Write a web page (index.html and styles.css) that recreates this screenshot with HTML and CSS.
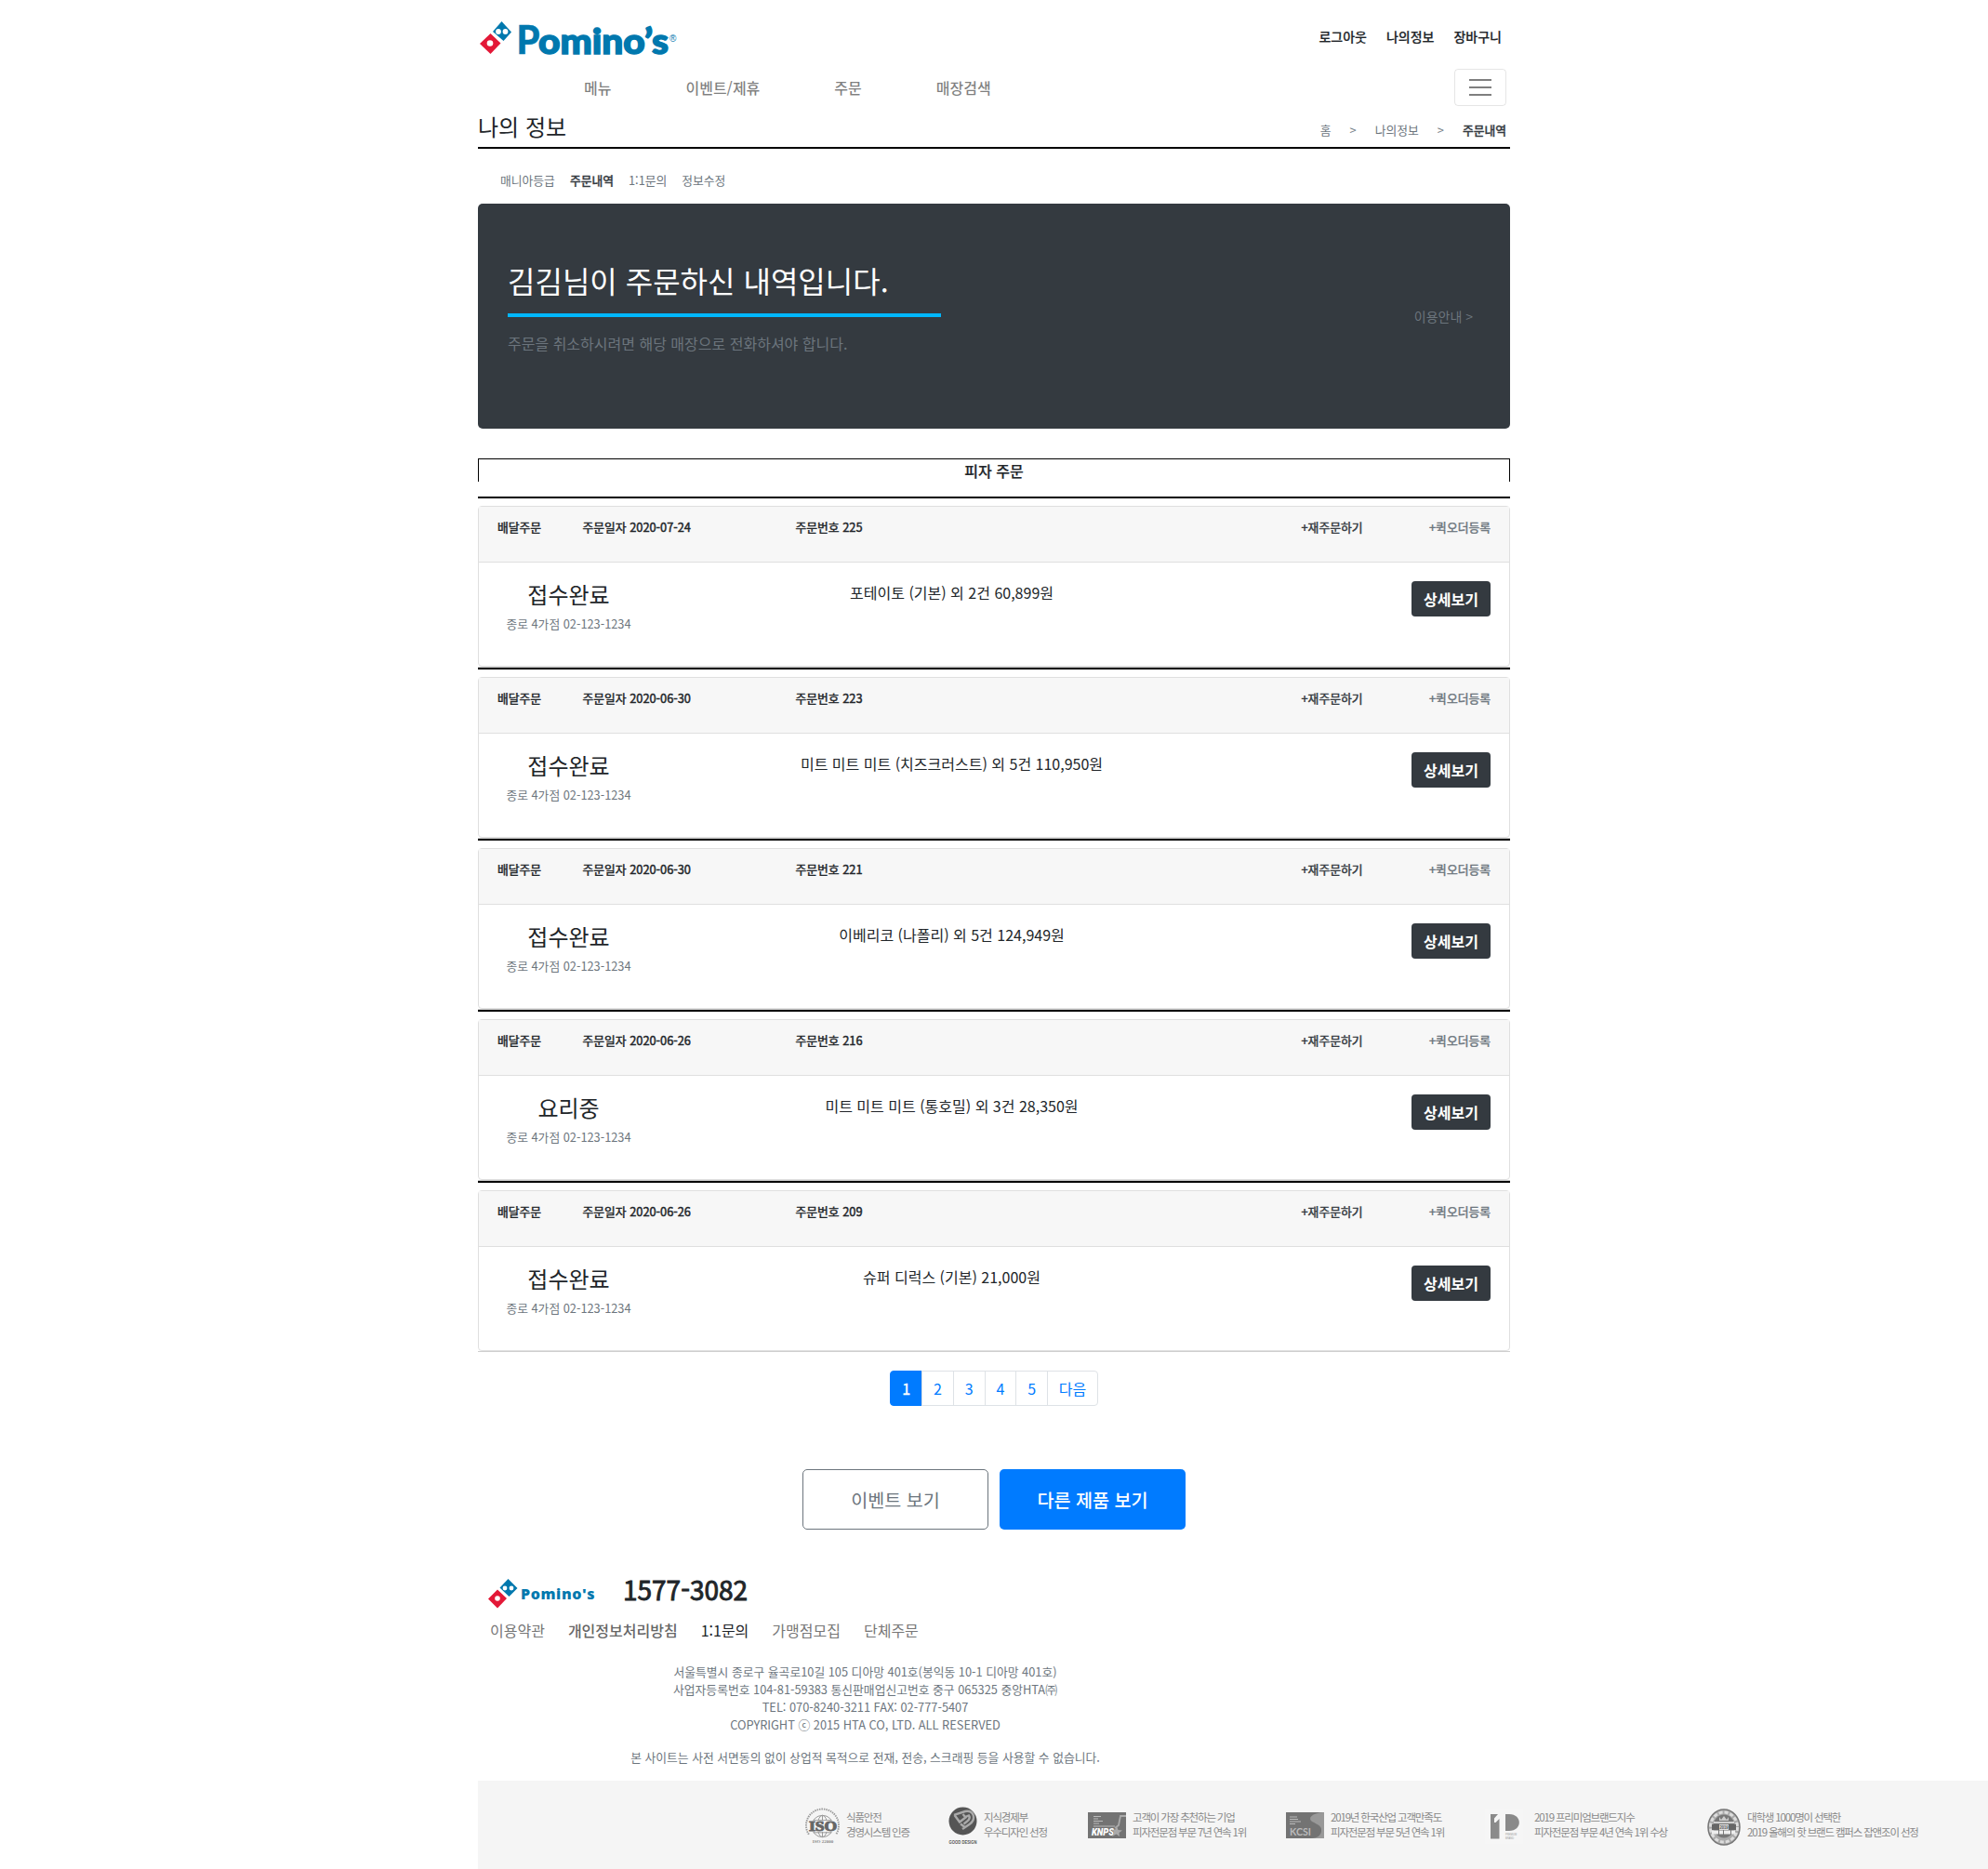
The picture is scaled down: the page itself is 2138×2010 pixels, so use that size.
FILE: index.html
```html
<!DOCTYPE html>
<html lang="ko">
<head>
<meta charset="utf-8">
<title>Pomino's - 주문내역</title>
<link rel="stylesheet" href="styles.css">
</head>
<body>
<div class="container">
  <header class="top">
    <svg class="logo" width="214" height="40" viewBox="0 0 214 40">
      <g transform="translate(2 0)">
        <path fill="#0078ae" d="M23.500 1L34 12.500L25.500 22L14 12Z"/>
        <path fill="#e31837" d="M11.500 14L22.500 24.500L11.500 36L0 25Z"/>
        <circle cx="20" cy="12" r="2.900" fill="#fff"/><circle cx="27.500" cy="12" r="2.900" fill="#fff"/>
        <circle cx="11" cy="24.500" r="3.300" fill="#fff"/>
      </g>
      <text class="logo-word logo-cap" x="41.500" y="36.300" textLength="25" lengthAdjust="spacingAndGlyphs">P</text>
      <text class="logo-word" x="65" y="35.600" textLength="140" lengthAdjust="spacingAndGlyphs">omino’s</text>
      <text class="logo-reg" x="206" y="23">®</text>
    </svg>
    <nav class="user-nav"><a>로그아웃</a><a>나의정보</a><a>장바구니</a></nav>
  </header>
  <div class="main-nav">
    <nav class="main-links"><a>메뉴</a><a>이벤트/제휴</a><a>주문</a><a>매장검색</a></nav>
    <button class="toggler"><span></span><span></span><span></span></button>
  </div>
  <div class="page-title">
    <h1>나의 정보</h1>
    <div class="crumbs"><span>홈</span><span>&gt;</span><span>나의정보</span><span>&gt;</span><b>주문내역</b></div>
  </div>
  <nav class="tabs"><a>매니아등급</a><b>주문내역</b><a>1:1문의</a><a>정보수정</a></nav>
  <section class="hero">
    <div class="hero-text">
      <h2>김김님이 주문하신 내역입니다.</h2>
      <p>주문을 취소하시려면 해당 매장으로 전화하셔야 합니다.</p>
    </div>
    <a class="guide">이용안내 &gt;</a>
  </section>
  <div class="order-tab">피자 주문</div>
  <ul class="orders">
    <li><article class="card">
      <div class="card-head"><span class="kind">배달주문</span><span class="date">주문일자 2020-07-24</span><span class="num">주문번호 225</span><span class="again">+재주문하기</span><span class="quick">+퀵오더등록</span></div>
      <div class="card-body"><div class="state"><strong>접수완료</strong><small>종로 4가점 02-123-1234</small></div><p>포테이토 (기본) 외 2건 60,899원</p><button class="detail">상세보기</button></div>
    </article></li>
    <li><article class="card">
      <div class="card-head"><span class="kind">배달주문</span><span class="date">주문일자 2020-06-30</span><span class="num">주문번호 223</span><span class="again">+재주문하기</span><span class="quick">+퀵오더등록</span></div>
      <div class="card-body"><div class="state"><strong>접수완료</strong><small>종로 4가점 02-123-1234</small></div><p>미트 미트 미트 (치즈크러스트) 외 5건 110,950원</p><button class="detail">상세보기</button></div>
    </article></li>
    <li><article class="card">
      <div class="card-head"><span class="kind">배달주문</span><span class="date">주문일자 2020-06-30</span><span class="num">주문번호 221</span><span class="again">+재주문하기</span><span class="quick">+퀵오더등록</span></div>
      <div class="card-body"><div class="state"><strong>접수완료</strong><small>종로 4가점 02-123-1234</small></div><p>이베리코 (나폴리) 외 5건 124,949원</p><button class="detail">상세보기</button></div>
    </article></li>
    <li><article class="card">
      <div class="card-head"><span class="kind">배달주문</span><span class="date">주문일자 2020-06-26</span><span class="num">주문번호 216</span><span class="again">+재주문하기</span><span class="quick">+퀵오더등록</span></div>
      <div class="card-body"><div class="state"><strong>요리중</strong><small>종로 4가점 02-123-1234</small></div><p>미트 미트 미트 (통호밀) 외 3건 28,350원</p><button class="detail">상세보기</button></div>
    </article></li>
    <li><article class="card">
      <div class="card-head"><span class="kind">배달주문</span><span class="date">주문일자 2020-06-26</span><span class="num">주문번호 209</span><span class="again">+재주문하기</span><span class="quick">+퀵오더등록</span></div>
      <div class="card-body"><div class="state"><strong>접수완료</strong><small>종로 4가점 02-123-1234</small></div><p>슈퍼 디럭스 (기본) 21,000원</p><button class="detail">상세보기</button></div>
    </article></li>
  </ul>
  <nav class="pages"><a class="on">1</a><a>2</a><a>3</a><a>4</a><a>5</a><a>다음</a></nav>
  <div class="actions"><button class="btn-line">이벤트 보기</button><button class="btn-fill">다른 제품 보기</button></div>
  <footer class="foot">
    <div class="foot-top">
      <svg class="foot-mark" width="32" height="34" viewBox="0 0 32 34">
        <path fill="#0078ae" d="M21.500 1L31.500 11L22.500 20L12.500 10.500Z"/>
        <path fill="#e31837" d="M10 12.500L20 22L10 32.500L0 22.500Z"/>
        <circle cx="18" cy="11" r="2.400" fill="#fff"/><circle cx="25" cy="11" r="2.400" fill="#fff"/>
        <circle cx="10" cy="22" r="2.800" fill="#fff"/>
      </svg>
      <span class="foot-word">Pomino's</span>
      <strong class="tel">1577-3082</strong>
    </div>
    <nav class="foot-links"><a>이용약관</a><a class="privacy">개인정보처리방침</a><a class="ask">1:1문의</a><a>가맹점모집</a><a>단체주문</a></nav>
    <address>서울특별시 종로구 율곡로10길 105 디아망 401호(봉익동 10-1 디아망 401호)<br>사업자등록번호 104-81-59383 통신판매업신고번호 중구 065325 중앙HTA㈜<br>TEL: 070-8240-3211 FAX: 02-777-5407<br>COPYRIGHT ⓒ 2015 HTA CO, LTD. ALL RESERVED</address>
    <p class="notice">본 사이트는 사전 서면동의 없이 상업적 목적으로 전재, 전송, 스크래핑 등을 사용할 수 없습니다.</p>
  </footer>
</div>
<div class="awards">
  <div class="award a1">
    <svg width="37" height="38" viewBox="0 0 38 38">
      <g fill="none" stroke="#999" stroke-width="1"><path d="M4 28A18 18 0 1 1 34 28" stroke-width="2" stroke-dasharray="1.500 1"/><circle cx="19" cy="19" r="12"/><ellipse cx="19" cy="19" rx="5.500" ry="12"/><path d="M19 7V31M9 12.500H29M9 26H29"/></g>
      <rect x="3" y="13" width="32" height="12" fill="#f5f5f5"/>
      <text x="4" y="24" class="iso" textLength="31" lengthAdjust="spacingAndGlyphs">ISO</text>
      <rect x="7" y="32" width="24" height="6" fill="#f5f5f5"/>
      <text x="8" y="37" class="tiny-serif" textLength="23" lengthAdjust="spacingAndGlyphs">ISO 22000</text>
    </svg>
    <p>식품안전<br>경영시스템 인증</p>
  </div>
  <div class="award a2">
    <svg width="31" height="44" viewBox="0 0 31 44">
      <circle cx="15.500" cy="15.500" r="15" fill="#555"/>
      <path fill="none" stroke="#aaa" stroke-width="2.400" d="M6.500 9L12 16.500L18.500 11.500L15.500 8M6 8.800L18 5C28 3.500 30 14 22.500 19L15 24M13 18.500L17 21.500M18 11L22 9.500C24.500 13 20 16 16.500 18.500"/>
      <text x="0.500" y="40" class="tiny" textLength="30" lengthAdjust="spacingAndGlyphs">GOOD DESIGN</text>
    </svg>
    <p>지식경제부<br>우수디자인 선정</p>
  </div>
  <div class="award a3">
    <svg width="41" height="28" viewBox="0 0 41 28">
      <rect width="41" height="28" fill="#737373"/>
      <path d="M6 4.500H14M6 7H11M6 9.500H16M6 12H12M6 15H29" stroke="#bbb" stroke-width="1" fill="none"/>
      <path d="M29 17L33 14L35 4H41" stroke="#aaa" stroke-width="1.800" fill="none"/>
      <text x="4" y="25" class="knps" textLength="24" lengthAdjust="spacingAndGlyphs">KNPS</text>
      <path fill="#aaa" d="M31 15L32.500 19L37 19.500L33.500 22L34 26L30.500 23.500L26 26L28 21.500L26 19L29.500 18.500Z"/>
    </svg>
    <p>고객이 가장 추천하는 기업<br>피자전문점 부문 7년 연속 1위</p>
  </div>
  <div class="award a4">
    <svg width="41" height="28" viewBox="0 0 41 28">
      <rect width="41" height="28" fill="#999"/>
      <path fill="#737373" d="M0 0H40C28 1 23 6 28 10C34 13 39 15 38 20C38 25 33 28 27 28H0Z"/>
      <path d="M4 5H12M4 7.500H13M4 10H16M4 12.500H10" stroke="#bbb" stroke-width="1"/>
      <text x="4" y="24.500" class="kcsi" textLength="23" lengthAdjust="spacingAndGlyphs">KCSI</text>
    </svg>
    <p>2019년 한국산업 고객만족도<br>피자전문점 부문 5년 연속 1위</p>
  </div>
  <div class="award a5">
    <svg width="43" height="37" viewBox="0 0 43 37">
      <rect width="41" height="37" fill="#f6f6f6"/>
      <path fill="#8a8a8a" d="M6 5H14L10 9.500V14H11.500L15.500 10V31.500H6ZM22 5H26C40.500 5 40.500 23 26 23H22Z"/>
      <text x="22" y="28" class="micro" textLength="12" lengthAdjust="spacingAndGlyphs">PREMIUM</text>
      <text x="22" y="32" class="micro" textLength="9" lengthAdjust="spacingAndGlyphs">BRAND</text>
    </svg>
    <p>2019 프리미엄브랜드지수<br>피자전문점 부문 4년 연속 1위 수상</p>
  </div>
  <div class="award a6">
    <svg width="36" height="40" viewBox="0 0 36 40">
      <ellipse cx="18" cy="20" rx="17" ry="19" fill="#aaa" stroke="#777" stroke-width="1.500"/>
      <ellipse cx="18" cy="20" rx="14.500" ry="16" fill="none" stroke="#ddd" stroke-width="3" stroke-dasharray="4 2"/>
      <ellipse cx="18" cy="19" rx="11.500" ry="12.500" fill="#777"/>
      <path d="M13 9L15 12L18 8L21 12L23 9V13H13Z" fill="#ccc"/>
      <path d="M7 15H29" stroke="#eee" stroke-width="1.500"/>
      <rect x="5" y="17" width="26" height="6" fill="#666"/><rect x="13" y="17" width="10" height="6" fill="#ddd"/>
      <text x="13.500" y="22" class="micro-dark" textLength="9" lengthAdjust="spacingAndGlyphs">2019</text>
      <path d="M5 25.500H31" stroke="#eee" stroke-width="4" stroke-dasharray="7 1 4 1"/>
    </svg>
    <p>대학생 1000명이 선택한<br>2019 올해의 핫 브랜드 캠퍼스 잡앤조이 선정</p>
  </div>
</div>
</body>
</html>
```
FILE: styles.css
```css
* { box-sizing: border-box; }
body { margin: 0; background: #fff; color: #212529; font: 400 16px/24px "Noto Sans CJK KR", sans-serif; }
h1, h2, p, ul { margin: 0; padding: 0; font-weight: 400; }
ul { list-style: none; }
button { font-family: inherit; padding: 0; margin: 0; }
.container { width: 1110px; margin: 0 auto; }

.top { height: 74px; display: flex; justify-content: space-between; padding: 22px 9px 0 0; }
.logo { overflow: visible; }
.logo-word { font: 900 38px "Lato", sans-serif; fill: #0078ae; stroke: #0078ae; stroke-width: 1.5px; }
.logo-cap { font-size: 42px; stroke-width: .5px; }
.logo-reg { font: 10px "Liberation Sans", sans-serif; fill: #0078ae; }
.user-nav { display: flex; gap: 21px; font-size: 14px; line-height: 20px; font-weight: 500; margin-top: 7px; -webkit-text-stroke: .2px; }

.main-nav { height: 40px; display: flex; justify-content: space-between; padding: 0 4px 0 114px; }
.main-links { display: flex; gap: 80px; line-height: 40px; font-weight: 500; color: rgba(0,0,0,.5); }
.toggler { width: 56px; height: 40px; border: 1px solid rgba(0,0,0,.1); border-radius: 4px; background: none; display: flex; flex-direction: column; align-items: center; justify-content: center; gap: 6px; }
.toggler span { width: 24px; height: 2px; background: #7f7f7f; }

.page-title { height: 46px; border-bottom: 2px solid #000; display: flex; justify-content: space-between; padding: 7px 4px 0 0; }
.page-title h1 { font-size: 24px; line-height: 29px; }
.crumbs { display: flex; gap: 20px; font-size: 12.8px; line-height: 20px; color: #6c757d; padding-top: 9px; }
.crumbs b, .tabs b { font-weight: 500; color: #343a40; -webkit-text-stroke: .3px; }
.tabs { height: 59px; padding: 24px 0 0 24px; display: flex; gap: 16px; font-size: 12.8px; line-height: 20px; color: #6c757d; }

.hero { height: 242px; border-radius: 5px; background: #343a40; display: flex; justify-content: space-between; padding: 63px 40px 0 32px; }
.hero h2 { width: 466px; height: 59px; border-bottom: 4px solid #00b7ff; color: #fff; font-size: 32px; line-height: 38px; }
.hero p { color: #6c757d; margin-top: 16px; }
.guide { color: #6c757d; font-size: 14px; line-height: 20px; margin-top: 48px; }
.order-tab { height: 25px; margin-top: 32px; border: 1px solid #000; border-bottom: 0; text-align: center; font-weight: 500; line-height: 24px; -webkit-text-stroke: .2px; }

.orders { margin-top: 16px; }
.orders li { height: 184px; border-top: 2px solid #000; padding-top: 8px; }
.orders li::after { content: ""; display: block; height: 1px; background: #cfcfcf; }
.card { height: 173px; border: 1px solid #dfdfdf; border-radius: 4px; }
.card-head { height: 60px; padding: 12px 20px 0; background: #f7f7f7; border-bottom: 1px solid #dfdfdf; display: grid; grid-template-columns: 91.500px 229px 544px 137.500px 1fr; font-size: 12.800px; line-height: 20px; white-space: nowrap; -webkit-text-stroke: .45px; }
.again { color: #343a40; }
.quick { color: #6c757d; }
.card-body { padding: 20px 20px 0; display: grid; grid-template-columns: 153px 1fr 85px; align-items: start; }
.state { display: flex; flex-direction: column; align-items: center; }
.state strong { font-size: 24px; line-height: 29px; font-weight: 400; margin-top: -1px; }
.state small { font-size: 12.800px; line-height: 20px; margin-top: 8px; color: #6c757d; }
.card-body p { text-align: center; padding-right: 159px; line-height: 24px; }
.detail { height: 38px; border: 0; border-radius: 4px; background: #343a40; color: #fff; font-size: 16px; font-weight: 700; }

.pages { display: flex; justify-content: center; margin-top: 20px; }
.pages a { height: 38px; border: 1px solid #dee2e6; margin-left: -1px; padding: 6px 11.950px; color: #007bff; line-height: 24px; }
.pages a:first-child { border-radius: 4px 0 0 4px; margin-left: 0; }
.pages a:last-child { border-radius: 0 4px 4px 0; padding: 6px 11.500px; }
.pages .on { background: #007bff; border-color: #007bff; color: #fff; -webkit-text-stroke: .4px; }
.actions { display: flex; justify-content: center; gap: 12px; margin-top: 68px; }
.actions button { width: 200px; height: 65px; border-radius: 5px; font-size: 19.600px; }
.actions .btn-line { border: 1px solid #6c757d; background: #fff; color: #6c757d; }
.actions .btn-fill { border: 0; background: #007bff; color: #fff; font-weight: 500; }

.foot { height: 270px; padding: 52px 0 0 11px; }
.foot-top { height: 34px; display: flex; align-items: flex-start; }
.foot-word { width: 110px; margin-left: 3px; font: 800 16px/34px "Open Sans", sans-serif; letter-spacing: .600px; color: #0078ae; }
.tel { font-size: 28px; line-height: 25px; font-weight: 400; -webkit-text-stroke: .9px; }
.foot-links { display: flex; gap: 25px; padding-left: 2px; margin-top: 10px; color: #777; line-height: 24px; }
.privacy { font-weight: 500; color: #666; }
.ask { color: #212529; }
.foot address { font-style: normal; font-size: 12.800px; line-height: 19px; width: 811px; text-align: center; margin-top: 23px; color: #6c757d; }
.notice { font-size: 12.800px; line-height: 19px; width: 811px; text-align: center; margin-top: 16px; color: #6c757d; }

.awards { height: 95px; margin-left: 514px; background: #f5f5f5; display: flex; align-items: flex-start; padding-left: 352px; }
.award { display: flex; gap: 7px; white-space: nowrap; }
.award p { font-size: 11.500px; line-height: 16px; letter-spacing: -1.170px; color: #888; margin-top: 31px; }
.award svg { flex: none; margin-top: 30px; overflow: visible; }
.a1 { width: 154px; }
.a2 { width: 150px; }
.a2 svg { margin-top: 28px; }
.a3 { width: 213px; }
.a3 svg, .a4 svg { margin-top: 34px; }
.a4 { width: 214px; }
.a5 { width: 239px; padding-left: 3px; }
.a5 svg { margin-top: 31px; margin-left: -3px; margin-right: 3px; }
.iso { font: 700 15px "Liberation Serif", serif; fill: #666; stroke: #666; }
.tiny-serif { font: 700 5px "Liberation Serif", serif; fill: #888; }
.tiny { font: 700 6px "Liberation Sans", sans-serif; fill: #555; }
.knps { font: italic 900 10px "Roboto", sans-serif; fill: #fff; }
.kcsi { font: 700 11px "Lato", sans-serif; fill: #bbb; }
.micro { font: 4px "Liberation Sans", sans-serif; fill: #999; }
.micro-dark { font: 700 5px "Liberation Sans", sans-serif; fill: #555; }
```
